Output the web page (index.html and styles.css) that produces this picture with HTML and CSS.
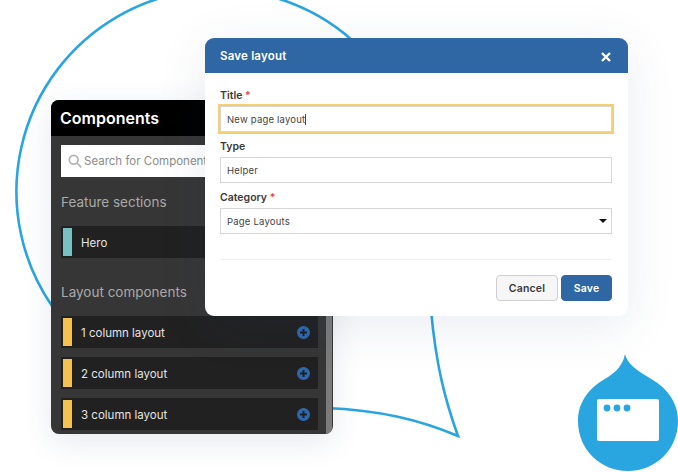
FILE: index.html
```html
<!DOCTYPE html>
<html lang="en">
<head>
  <meta charset="UTF-8">
  <meta name="viewport" content="width=device-width, initial-scale=1.0">
  <title>Save layout</title>
  <link rel="stylesheet" href="styles.css">
</head>
<body>
  <div class="stage">
    <svg class="bubble" xmlns="http://www.w3.org/2000/svg" width="678" height="472" viewBox="0 0 678 472" fill="none" stroke="#29a5e0" stroke-width="2.6">
      <path d="M52 306A202 202 0 1 1 400 103"></path>
      <path d="M431 310C436 365 445 400 458 436C420 420 380 410 325 408"></path>
    </svg>

    <div class="panel">
      <div class="panel-head">Components</div>
      <div class="panel-body">
        <div class="search">
          <svg xmlns="http://www.w3.org/2000/svg" width="14" height="14" viewBox="0 0 14 14" fill="none" stroke="#b4b4b4" stroke-width="1.7" stroke-linecap="round">
            <circle cx="5.7" cy="5.7" r="4.4"></circle>
            <line x1="9" y1="9" x2="12.8" y2="12.8"></line>
          </svg>
          <span>Search for Components</span>
        </div>
        <h2 class="group-title first">Feature sections</h2>
        <div class="row">
          <span class="swatch teal"></span>
          <span class="row-name">Hero</span>
        </div>
        <h2 class="group-title">Layout components</h2>
        <div class="row">
          <span class="swatch"></span>
          <span class="row-name">1 column layout</span>
          <svg class="plus" xmlns="http://www.w3.org/2000/svg" width="13" height="13" viewBox="0 0 13 13">
            <circle cx="6.5" cy="6.5" r="6.5" fill="#2e69ad"></circle>
            <path d="M6.5 3v7M3 6.5h7" stroke="#1d2026" stroke-width="2"></path>
          </svg>
        </div>
        <div class="row">
          <span class="swatch"></span>
          <span class="row-name">2 column layout</span>
          <svg class="plus" xmlns="http://www.w3.org/2000/svg" width="13" height="13" viewBox="0 0 13 13">
            <circle cx="6.5" cy="6.5" r="6.5" fill="#2e69ad"></circle>
            <path d="M6.5 3v7M3 6.5h7" stroke="#1d2026" stroke-width="2"></path>
          </svg>
        </div>
        <div class="row">
          <span class="swatch"></span>
          <span class="row-name">3 column layout</span>
          <svg class="plus" xmlns="http://www.w3.org/2000/svg" width="13" height="13" viewBox="0 0 13 13">
            <circle cx="6.5" cy="6.5" r="6.5" fill="#2e69ad"></circle>
            <path d="M6.5 3v7M3 6.5h7" stroke="#1d2026" stroke-width="2"></path>
          </svg>
        </div>
      </div>
    </div>

    <div class="modal">
      <div class="modal-head">
        <span>Save layout</span>
        <svg xmlns="http://www.w3.org/2000/svg" width="10" height="10" viewBox="0 0 10 10" stroke="#fff" stroke-width="2.4">
          <path d="M1 1l8 8M9 1l-8 8"></path>
        </svg>
      </div>
      <div class="modal-body">
        <div class="field">
          <label>Title <b>*</b></label>
          <div class="input focused">New page layout<i class="caret"></i></div>
        </div>
        <div class="field">
          <label>Type</label>
          <div class="input">Helper</div>
        </div>
        <div class="field">
          <label>Category <b>*</b></label>
          <div class="input select">Page Layouts<i class="arrow"></i></div>
        </div>
        <div class="actions">
          <button class="btn">Cancel</button>
          <button class="btn primary">Save</button>
        </div>
      </div>
    </div>

    <svg class="drop" xmlns="http://www.w3.org/2000/svg" width="100" height="118" viewBox="0 0 100 118">
      <path d="M47 0C49 9 58 16 70 23C88 33 100 47 100 67C100 95 78 117 50 117C22 117 0 95 0 67C0 47 12 33 30 23C38 18 45 11 47 0Z" fill="#29a5e0"></path>
      <rect x="19" y="45" width="62" height="42" rx="2" fill="#fff"></rect>
      <circle cx="29" cy="54" r="3.4" fill="#29a5e0"></circle>
      <circle cx="39" cy="54" r="3.4" fill="#29a5e0"></circle>
      <circle cx="49" cy="54" r="3.4" fill="#29a5e0"></circle>
    </svg>
  </div>
</body>
</html>
```

FILE: styles.css
```css
* {
  box-sizing: border-box;
  margin: 0;
  padding: 0;
  font-family: Inter, 'Liberation Sans', sans-serif;
}

body {
  background-color: #fff;
  overflow: hidden;
}

.stage {
  position: relative;
  width: 678px;
  height: 472px;
  overflow: hidden;
}

.bubble {
  position: absolute;
  left: 0;
  top: 0;
}

/* components panel */
.panel {
  position: absolute;
  left: 51px;
  top: 100px;
  width: 282px;
  height: 334px;
  background-color: #363636;
  border-radius: 8px;
  overflow: hidden;
  box-shadow: 0 8px 30px rgba(50, 70, 120, 0.12);
}

.panel::after {
  content: '';
  position: absolute;
  right: 1px;
  top: 36px;
  bottom: 0;
  width: 6px;
  background-color: #7b7b7b;
}

.panel-head {
  height: 36px;
  padding-left: 9px;
  background-color: #000;
  color: #fff;
  font-size: 16px;
  font-weight: 600;
  line-height: 36px;
}

.panel-body {
  padding: 9px 15px 0 10px;
}

.search {
  display: flex;
  align-items: center;
  gap: 2px;
  width: 300px;
  height: 32px;
  padding-left: 7px;
  background-color: #fff;
  color: #8b8b8b;
  font-size: 11.5px;
  white-space: nowrap;
}

.group-title {
  margin: 26px 0 15px;
  color: #a9a9a9;
  font-size: 13.5px;
  font-weight: 400;
  line-height: 17px;
}

.group-title.first {
  margin-top: 17px;
}

.row {
  display: flex;
  align-items: center;
  height: 32px;
  margin-bottom: 9px;
  padding: 0 8px 0 2px;
  background-color: #212121;
}

.swatch {
  width: 9px;
  height: 28px;
  background-color: #f5c14f;
}

.swatch.teal {
  background-color: #76c1c3;
}

.row-name {
  flex: 1;
  margin: 2px 0 0 9px;
  color: #e4e4e4;
  font-size: 11.5px;
}

/* save dialog */
.modal {
  position: absolute;
  left: 205px;
  top: 38px;
  width: 423px;
  height: 278px;
  background-color: #fff;
  border-radius: 9px;
  overflow: hidden;
  box-shadow: 0 10px 50px rgba(50, 70, 120, 0.1);
}

.modal-head {
  display: flex;
  align-items: center;
  justify-content: space-between;
  height: 35px;
  padding: 0 17px 0 15px;
  background-color: #2e67a3;
  color: #fff;
  font-size: 11.5px;
  font-weight: 600;
  letter-spacing: 0.2px;
}

.modal-head svg {
  margin-top: 2px;
}

.modal-body {
  padding: 16px 16px 0 15px;
}

.field {
  margin-bottom: 8px;
}

label {
  display: block;
  margin-bottom: 4px;
  color: #3a3a3a;
  font-size: 10.5px;
  font-weight: 600;
  line-height: 13px;
}

label b {
  color: #e5484d;
  font-weight: 600;
}

.input {
  position: relative;
  display: flex;
  align-items: center;
  height: 26px;
  padding-left: 6px;
  background-color: #fff;
  border: 1px solid #d6d6d6;
  color: #444;
  font-size: 9.5px;
  letter-spacing: 0.2px;
}

.input.focused {
  outline: 2px solid #f4cf70;
}

.caret {
  width: 1px;
  height: 11px;
  background-color: #444;
}

.arrow {
  position: absolute;
  right: 4px;
  top: 10px;
  border-left: 4px solid transparent;
  border-right: 4px solid transparent;
  border-top: 4px solid #111;
}

.actions {
  display: flex;
  justify-content: flex-end;
  gap: 3px;
  margin-top: 25px;
  padding-top: 15px;
  border-top: 1px solid #efefef;
}

.btn {
  width: 62px;
  height: 26px;
  background-color: #f6f6f6;
  border: 1px solid #cfcfcf;
  border-radius: 4px;
  color: #3a3a3a;
  font-size: 10.5px;
  font-weight: 600;
  letter-spacing: 0.2px;
}

.btn.primary {
  width: 51px;
  background-color: #2e67a3;
  border-color: #2e67a3;
  color: #fff;
}

/* drupal drop */
.drop {
  position: absolute;
  left: 578px;
  top: 354px;
}
```
